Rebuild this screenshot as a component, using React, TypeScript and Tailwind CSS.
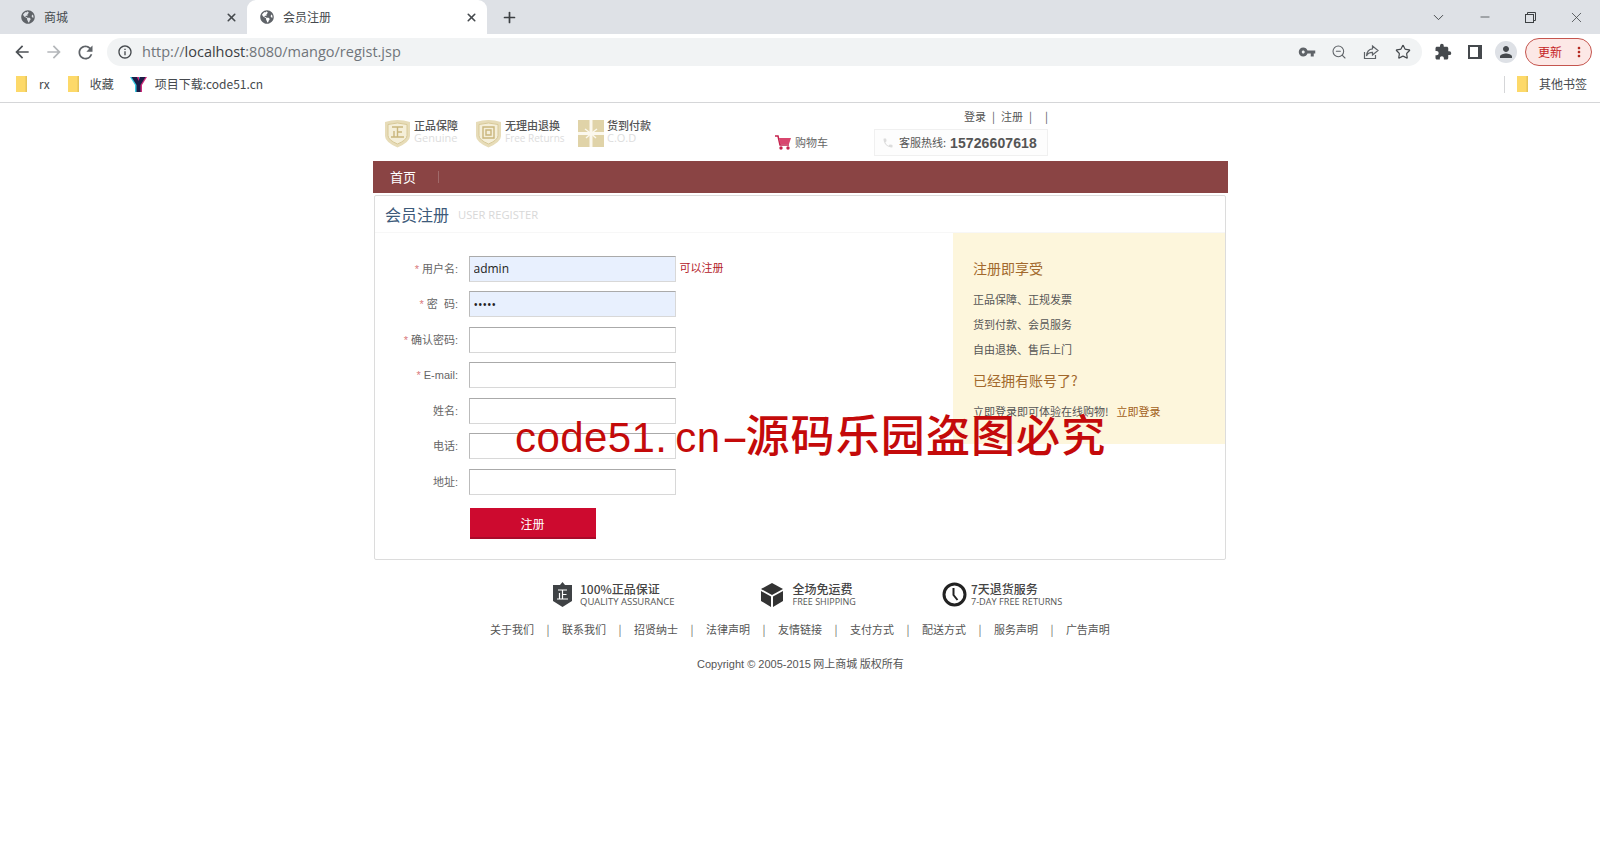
import { ChevronDown, Minus, Plus, Star, X, ZoomOut } from "lucide-react";
import { FaGlobeAmericas } from "react-icons/fa";
import {
  MdArrowBack,
  MdArrowForward,
  MdExtension,
  MdInfoOutline,
  MdMoreVert,
  MdPerson,
  MdPhone,
  MdRefresh,
  MdVpnKey,
} from "react-icons/md";

const fields = [
  { label: "用户名:", required: true, value: "admin", type: "text", filled: true },
  { label: "密  码:", required: true, value: "admin", type: "password", filled: true },
  { label: "确认密码:", required: true, value: "", type: "password", filled: false },
  { label: "E-mail:", required: true, value: "", type: "text", filled: false },
  { label: "姓名:", required: false, value: "", type: "text", filled: false },
  { label: "电话:", required: false, value: "", type: "text", filled: false },
  { label: "地址:", required: false, value: "", type: "text", filled: false },
];

const footerLinks = ["关于我们", "联系我们", "招贤纳士", "法律声明", "友情链接", "支付方式", "配送方式", "服务声明", "广告声明"];

const Folder = () => (
  <svg width="11" height="16" viewBox="0 0 11 16">
    <rect x="0" y="0" width="11" height="16" fill="#fdd969" />
    <rect x="9.5" y="0" width="1.5" height="16" fill="#e6c45a" />
  </svg>
);

const Shield = ({ glyph }: { glyph: "zheng" | "tui" }) => (
  <svg width="27" height="29" viewBox="0 0 27 29" className="shrink-0">
    <path d="M1 3 Q13.5 -1 26 3 V17 Q26 23 13.5 28.5 Q1 23 1 17 Z" fill="#e7dcb8" />
    <path d="M4 5.5 Q13.5 2.5 23 5.5 V16.5 Q23 21 13.5 25 Q4 21 4 16.5 Z" fill="#f5efd9" stroke="#d8c998" strokeWidth="1" />
    {glyph === "zheng" ? (
      <path d="M8 8 H19 M13.5 8 V18 M13.5 13 H18 M10 12 V18 M7 18 H20" stroke="#c9b67c" strokeWidth="1.4" fill="none" />
    ) : (
      <path d="M8 8 H19 V19 H8 Z M11 11 H16 V16 H11 Z" stroke="#c9b67c" strokeWidth="1.4" fill="none" />
    )}
  </svg>
);

const Gift = () => (
  <svg width="26" height="27" viewBox="0 0 26 27" className="shrink-0">
    <rect width="26" height="27" fill="#e0d3a8" />
    <rect x="11.5" width="3" height="27" fill="#fbf8ee" />
    <rect y="12" width="26" height="3" fill="#fbf8ee" />
    <path d="M13 13.5 L7 9 M13 13.5 L19 9 M13 13.5 L8 18 M13 13.5 L18 18" stroke="#fbf8ee" strokeWidth="1.4" />
  </svg>
);

const Badge = ({ icon, title, sub, width, subSize }: { icon: React.ReactNode; title: string; sub: string; width: string; subSize: string }) => (
  <div className={`flex h-[29px] items-center gap-[3px] ${width}`}>
    {icon}
    <div className="mb-[4px] flex flex-col">
      <span className="text-[11px] leading-[13px] font-medium text-[#555]">{title}</span>
      <span className={`leading-[12px] text-[#ddd] font-['Open_Sans',sans-serif] whitespace-nowrap ${subSize}`}>{sub}</span>
    </div>
  </div>
);

const Browser = () => (
  <div className="font-['Noto_Sans_CJK_SC',sans-serif]">
    {/* Tabs */}
    <div className="relative flex h-[34px] items-center bg-[#dee1e6] text-[12px] text-[#45494d]">
      <div className="flex h-full w-[247px] items-center pl-[21px] pr-[9px]">
        <FaGlobeAmericas className="text-[14px] text-[#5f6368]" />
        <span className="ml-[9px]">商城</span>
        <X size={13} strokeWidth={3} className="ml-auto text-[#45494d]" />
      </div>
      <div className="flex h-full w-[240px] items-center rounded-t-[9px] bg-white pl-[13px] pr-[9px]">
        <FaGlobeAmericas className="text-[14px] text-[#5f6368]" />
        <span className="ml-[9px]">会员注册</span>
        <X size={13} strokeWidth={3} className="ml-auto text-[#45494d]" />
      </div>
      <Plus size={17} strokeWidth={2.4} className="ml-[14px] text-[#3c4043]" />
      <div className="ml-auto flex items-center text-[#3c4043]">
        <ChevronDown size={17} strokeWidth={1.3} className="mr-[31px]" />
        <Minus size={14} strokeWidth={1.3} className="mr-[33px]" />
        <svg width="11" height="11" viewBox="0 0 11 11" fill="none" stroke="#3c4043" className="mr-[32px]">
          <rect x="0.5" y="2.5" width="8" height="8" />
          <path d="M2.5 2.5 V0.5 H10.5 V8.5 H8.5" />
        </svg>
        <X size={17} strokeWidth={1.1} className="mr-[15px]" />
      </div>
    </div>

    {/* Toolbar */}
    <div className="flex h-[34px] items-center bg-white pt-[2px] text-[#5f6368]">
      <MdArrowBack size={20} className="ml-[12px] text-[#4d5156]" />
      <MdArrowForward size={20} className="ml-[12px] text-[#b4b7ba]" />
      <MdRefresh size={21} className="ml-[11px]" />
      <div className="ml-[11px] flex h-[28px] w-[1315px] items-center rounded-full bg-[#f1f3f4]">
        <MdInfoOutline size={16} className="ml-[10px] text-[#45494d]" />
        <span className="ml-[9px] font-['Open_Sans',sans-serif] text-[14.5px] text-[#70757a]">
          http://<span className="text-[#3c4043]">localhost</span>:8080/mango/regist.jsp
        </span>
        <MdVpnKey size={18} className="ml-auto text-[#5f6368]" />
        <ZoomOut size={16} strokeWidth={1.6} className="ml-[15px]" />
        <svg width="16" height="16" viewBox="0 0 16 16" fill="none" stroke="#5f6368" strokeWidth="1.2" className="ml-[16px]">
          <path d="M1.5 8 V14.5 H12.5 V11" />
          <path d="M9.5 2 L15 6.5 L9.5 11 V8.4 C6.5 8.4 4.5 9.6 3.5 12 C3.7 8.4 5.8 5.2 9.5 4.8 Z" />
        </svg>
        <Star size={16} strokeWidth={1.8} className="ml-[16px] mr-[11px] text-[#45494d]" />
      </div>
      <MdExtension size={18} className="ml-[12px] text-[#45494d]" />
      <svg width="14" height="14" viewBox="0 0 14 14" className="ml-[16px]">
        <rect x="1" y="1" width="12" height="12" fill="none" stroke="#45494d" strokeWidth="2" />
        <rect x="10" y="1" width="3" height="12" fill="#45494d" />
      </svg>
      <div className="ml-[13px] flex h-[22px] w-[22px] items-center justify-center rounded-full bg-[#dee1e6]">
        <MdPerson size={18} className="text-[#45494d]" />
      </div>
      <div className="ml-[8px] flex h-[28px] w-[67px] items-center rounded-full border border-[#c5554e] bg-[#fce8e6] pl-[12px] text-[12px] text-[#c5221f]">
        更新
        <MdMoreVert size={16} className="ml-auto mr-[4px] text-[#b3261e]" />
      </div>
      <div className="w-[8px]" />
    </div>

    {/* Bookmarks */}
    <div className="flex h-[35px] items-center border-b border-[#d5d6d8] bg-white pb-[2px] text-[12px] text-[#45494d]">
      <div className="ml-[16px] flex items-center">
        <Folder />
        <span className="ml-[12px]">rx</span>
      </div>
      <div className="ml-[18px] flex items-center">
        <Folder />
        <span className="ml-[11px]">收藏</span>
      </div>
      <div className="ml-[16px] flex items-center">
        <svg width="17" height="17" viewBox="0 0 17 17">
          <path d="M0 1 H6 L8 5 L9 1 H14 L9 9 V16 H5 V9 Z" fill="#37c8e0" />
          <path d="M3 1 H9 L9 5 L11 1 H17 L12 9 V16 H8 V9 Z" fill="#d02a7a" />
          <path d="M1.5 1 H7 L8.5 5 L10 1 H15.5 L10.5 9 V16 H6.5 V9 Z" fill="#1b1d46" />
        </svg>
        <span className="ml-[8px]">项目下载:code51.cn</span>
      </div>
      <div className="ml-auto flex items-center">
        <div className="h-[17px] w-px bg-[#d5d6d8]" />
        <div className="ml-[12px]"><Folder /></div>
        <span className="ml-[11px] mr-[13px]">其他书签</span>
      </div>
    </div>
  </div>
);

const Header = () => (
  <div className="flex h-[58px] justify-between">
    <div className="flex items-start pl-[11px] pt-[16px]">
      <Badge icon={<Shield glyph="zheng" />} title="正品保障" sub="Genuine" width="w-[91px]" subSize="text-[11px]" />
      <Badge icon={<Shield glyph="tui" />} title="无理由退换" sub="Free Returns" width="w-[103px]" subSize="text-[10px]" />
      <Badge icon={<Gift />} title="货到付款" sub="C.O.D" width="" subSize="text-[11px]" />
    </div>
    <div className="mr-[180px] flex flex-col items-end">
      <div className="mt-[4px] flex h-[18px] items-center text-[11px] text-[#555]">
        <span>登录</span>
        <span className="mx-[6px]">|</span>
        <span>注册</span>
        <span className="ml-[6px]">|</span>
        <span className="ml-[13px]">|</span>
      </div>
      <div className="mt-[4px] flex items-center">
        <svg width="16" height="15" viewBox="0 0 16 15">
          <path d="M0 1 H3 L5 10 H14" fill="none" stroke="#c4214c" strokeWidth="1.5" />
          <path d="M4 3 H16 L14 9 H5 Z" fill="#d8466e" />
          <circle cx="6" cy="13" r="1.7" fill="#c4214c" />
          <circle cx="13" cy="13" r="1.7" fill="#c4214c" />
        </svg>
        <span className="ml-[4px] text-[11px] text-[#666]">购物车</span>
        <div className="ml-[46px] flex h-[27px] w-[174px] items-center border border-[#f0f0f0] bg-[#fdfdfd] pl-[7px]">
          <MdPhone size={12} className="text-[#dcdcdc]" />
          <span className="ml-[5px] text-[11px] text-[#555]">客服热线:</span>
          <span className="ml-[4px] font-['Liberation_Sans',sans-serif] text-[14px] font-bold leading-none tracking-[0.1px] text-[#555]">15726607618</span>
        </div>
      </div>
    </div>
  </div>
);

const RegisterForm = () => (
  <div className="flex h-[326px] flex-col gap-[10.5px] pt-[23px] font-['Liberation_Sans','Noto_Sans_CJK_SC',sans-serif]">
    {fields.map((field) => (
      <div key={field.label} className="flex h-[25px] items-center">
        <label className="flex w-[83px] justify-end whitespace-pre pt-[1px] text-[11px] text-[#666]">
          {field.required && <span className="mr-[3px] text-[#d9797c]">*</span>}
          {field.label}
        </label>
        <input
          readOnly
          type={field.type}
          value={field.value}
          className={`ml-[10.5px] h-[26px] w-[207px] border border-[#d8d8d8] border-t-[#aaaaaa] border-l-[#bbbbbb] px-[4px] font-['Open_Sans',sans-serif] text-[12px] text-[#222] outline-none ${
            field.filled ? "bg-[#e8f0fe]" : "bg-white"
          }`}
        />
        {field.label === "用户名:" && <span className="ml-[4px] text-[11px] text-[#b3202a]">可以注册</span>}
      </div>
    ))}
    <button className="ml-[94.5px] mt-[3px] h-[31px] w-[126px] border-b-2 border-[#a90a2a] bg-[#cd0a2f] pt-[5px] text-[12px] text-white">注册</button>
  </div>
);

const SidePanel = () => (
  <div className="ml-auto h-[211px] w-[272px] bg-[#fdf6dc] pl-[20px] pt-[25px] text-[11px] text-[#555]">
    <h3 className="text-[14px] leading-[20px] text-[#a2692d]">注册即享受</h3>
    <p className="mt-[13px] leading-[16px]">正品保障、正规发票</p>
    <p className="mt-[9px] leading-[16px]">货到付款、会员服务</p>
    <p className="mt-[9px] leading-[16px]">自由退换、售后上门</p>
    <h3 className="mt-[13px] text-[14px] leading-[20px] text-[#a2692d]">已经拥有账号了?</h3>
    <p className="mt-[13px] leading-[16px]">
      立即登录即可体验在线购物!<span className="ml-[8px] text-[#a2601a]">立即登录</span>
    </p>
  </div>
);

const QualityBar = () => (
  <div className="mt-[22px] flex h-[25px] items-center font-medium">
    <div className="ml-[180px] flex items-center">
      <svg width="19" height="25" viewBox="0 0 19 25">
        <path d="M9.5 0 L12 3 H19 V19 L9.5 25 L0 19 V3 H7 Z" fill="#3f4245" />
        <path d="M5 8 H14 M9.5 8 V17 M9.5 12.5 H13.5 M6.5 11 V17 M4 17 H15" stroke="#fff" strokeWidth="1.2" fill="none" />
      </svg>
      <div className="ml-[8px] flex flex-col leading-none">
        <span className="text-[12px] text-[#444]">100%正品保证</span>
        <span className="mt-[2px] text-[9.5px] text-[#555] font-['Open_Sans',sans-serif] whitespace-nowrap">QUALITY ASSURANCE</span>
      </div>
    </div>
    <div className="ml-[86px] flex items-center">
      <svg width="22" height="24" viewBox="0 0 22 24">
        <path d="M11 0 L22 6 L11 12 L0 6 Z" fill="#333" />
        <path d="M0 8 L10 13.5 V24 L0 18 Z M22 8 L12 13.5 V24 L22 18 Z" fill="#333" />
      </svg>
      <div className="ml-[10px] flex flex-col leading-none">
        <span className="text-[12px] text-[#444]">全场免运费</span>
        <span className="mt-[2px] text-[9px] text-[#555] font-['Open_Sans',sans-serif] whitespace-nowrap">FREE SHIPPING</span>
      </div>
    </div>
    <div className="ml-[86px] flex items-center">
      <svg width="25" height="25" viewBox="0 0 25 25" fill="none" stroke="#222">
        <circle cx="12.5" cy="12.5" r="10.5" strokeWidth="3" />
        <path d="M11.5 6 V13 L15.5 18" strokeWidth="2" />
      </svg>
      <div className="ml-[4px] flex flex-col leading-none">
        <span className="text-[12px] text-[#444]">7天退货服务</span>
        <span className="mt-[2px] text-[9.2px] text-[#555] font-['Open_Sans',sans-serif] whitespace-nowrap">7-DAY FREE RETURNS</span>
      </div>
    </div>
  </div>
);

const Footer = () => (
  <div>
    <QualityBar />
    <div className="mt-[14px] flex h-[16px] items-center pl-[117px] text-[11px] text-[#555]">
      {footerLinks.map((link, i) => (
        <span key={link} className="flex items-center">
          {i > 0 && <span className="mx-[12.5px] text-[#666]">|</span>}
          {link}
        </span>
      ))}
    </div>
    <p className="mt-[18px] pl-[324px] text-[11px] leading-[16px] text-[#555]">
      <span className="font-['Liberation_Sans',sans-serif]">Copyright © 2005-2015</span> 网上商城 版权所有
    </p>
  </div>
);

export default function App() {
  return (
    <div className="relative h-[852px] w-[1600px] overflow-hidden bg-white font-['Noto_Sans_CJK_SC',sans-serif]">
      <Browser />
      <div className="ml-[373px] w-[855px]">
        <Header />
        <div className="flex h-[32px] items-center bg-[#8a4444] pl-[17px] text-[13px] text-white">
          首页
          <span className="ml-[22px] h-[12px] w-px bg-[#a06a6a]" />
        </div>
        <div className="ml-[1px] mt-[2px] h-[365px] w-[852px] rounded-[2px] border border-[#dcdcdc]">
          <div className="flex h-[37px] items-center border-b border-[#f7f7f7] pl-[10px]">
            <span className="text-[16px] text-[#3d5a7a]">会员注册</span>
            <span className="ml-[9px] mt-[3px] font-['Open_Sans',sans-serif] text-[11.2px] text-[#d8d8d8]">USER REGISTER</span>
          </div>
          <div className="flex">
            <RegisterForm />
            <SidePanel />
          </div>
        </div>
        <Footer />
      </div>
      {/* watermark */}
      <div className="absolute left-[515px] top-[409px] flex items-baseline whitespace-nowrap font-['Liberation_Sans','Noto_Sans_CJK_SC',sans-serif] leading-[56px] text-[#c40a0a]">
        <span className="text-[42px] tracking-[0.4px] [word-spacing:-4px]">code51. cn</span>
        <span className="inline-block w-[25px] origin-left scale-x-[2] text-[42px]">-</span>
        <span className="text-[44px] font-medium tracking-[1.1px]">源码乐园盗图必究</span>
      </div>
    </div>
  );
}
